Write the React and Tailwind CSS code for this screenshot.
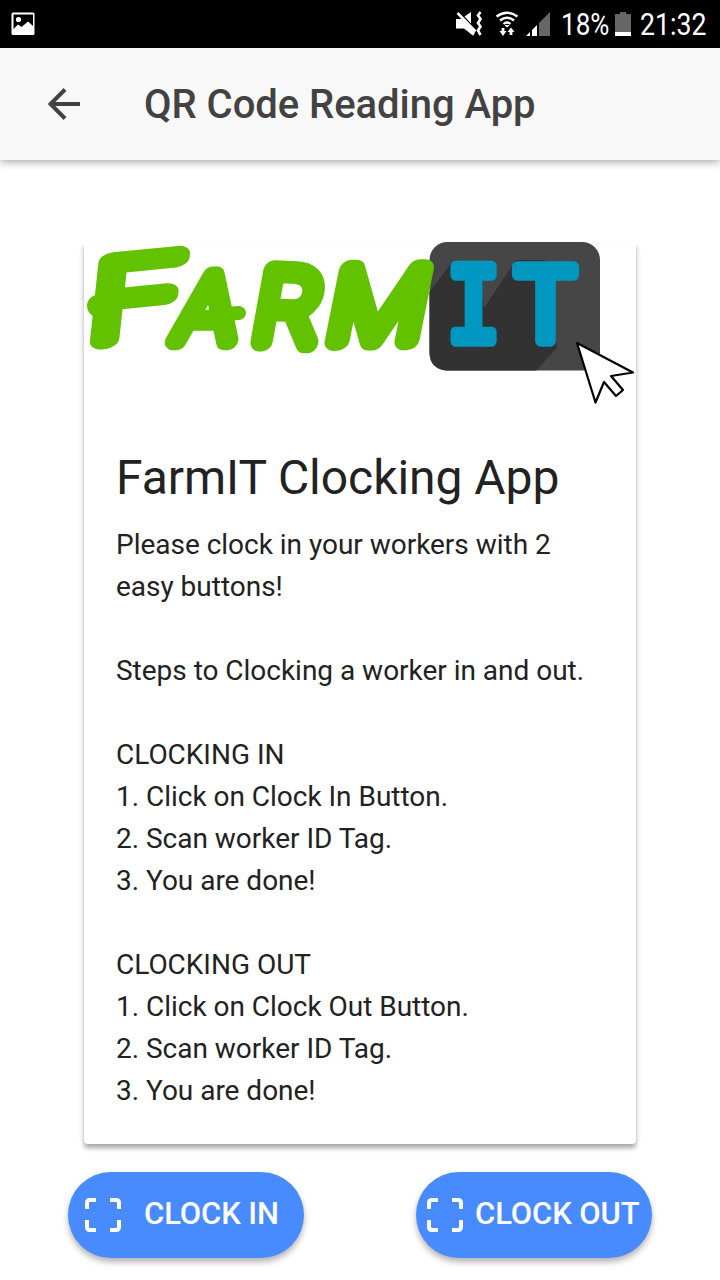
const instructions = [
  'Please clock in your workers with 2 easy buttons!',
  '',
  'Steps to Clocking a worker in and out.',
  '',
  'CLOCKING IN',
  '1. Click on Clock In Button.',
  '2. Scan worker ID Tag.',
  '3. You are done!',
  '',
  'CLOCKING OUT',
  '1. Click on Clock Out Button.',
  '2. Scan worker ID Tag.',
  '3. You are done!',
];

function StatusBar() {
  return (
    <div className="flex h-12 items-center bg-black pl-[11px] pr-[14px] text-white">
      <svg className="h-6 w-6" viewBox="0 0 24 24">
        <path
          fill="white"
          fillRule="evenodd"
          d="M2 .5h20q1.500 0 1.500 1.500v19.500q0 1.500-1.500 1.500H2q-1.500 0-1.500-1.500V2Q.5.500 2 .5ZM2.500 2.500v14.500l4.500-4.500 3.500 2.500 6.500-5.500 5 4.500V2.500Z"
        />
        <circle cx="7.500" cy="7.500" r="2.600" fill="white" />
      </svg>
      <svg className="ml-auto h-[26px] w-[96px]" viewBox="455 11 96 26">
        <path fill="white" d="M456 19h6l13 14-2 2.500-9-7h-8ZM464.500 16.500l6.500-4.500v11.500Z" />
        <path fill="white" d="m462 26 11 9.500 1.500-3-6-8Z" />
        <path stroke="white" strokeWidth="2.600" d="m457.500 13 18 18.500" />
        <path fill="none" stroke="white" strokeWidth="2.600" d="m480.500 12-2.500 3.500 2.500 3.500-2.500 4 2.500 3.500-2.500 4 2.500 4.500" />
        <g fill="none" stroke="white" strokeWidth="2.300">
          <path d="M496.500 16.500q10.500-7.500 21 0M500 20.500q7-5.500 14 0M503.500 24q3.500-3 7 0" />
          <path strokeWidth="2.800" d="M503 28v5M511 35v-5" />
        </g>
        <path fill="white" d="m499.500 31 3.500 5 3.500-5ZM507.500 32l3.500-4.500 3.500 4.500ZM504.500 25h5l-2.500 2.500Z" />
        <path fill="white" d="m526 36 4-4v4ZM532 36v-6l5-5v11Z" />
        <path fill="#666" d="M539 36V23l11-11v24Z" />
      </svg>
      <span className="ml-[10px] mt-px w-[48px] origin-left scale-x-[.84] font-[Roboto] text-[31px] leading-none">18%</span>
      <svg className="ml-[6px] h-6 w-4" viewBox="0 0 16 24">
        <path fill="#666" d="M0 2h5V0h6v2h5v18H0Z" />
        <path fill="white" d="M0 20h16v4H0Z" />
      </svg>
      <span className="ml-[9px] mt-px w-[66px] origin-left scale-x-[.86] font-[Roboto] text-[31px] leading-none">21:32</span>
    </div>
  );
}

function Logo() {
  return (
    <svg className="block h-[164px] w-[552px] overflow-visible" viewBox="84 242 552 164" role="img">
      <rect x="429.500" y="242" width="170.500" height="128.500" rx="18" fill="#464646" />
      <path fill="#323232" d="M429.500 292 452 262h22l10 46 32-48h29l12 88-21 22.500H446q-16.500-2-16.500-18Z" />
      <g
        fill="#62c200"
        stroke="#62c200"
        strokeLinejoin="round"
        strokeLinecap="round"
        fontFamily="Roboto, sans-serif"
        fontWeight="100"
        fontSize="100"
      >
        <text transform="matrix(1.5 -.15 -.12 1.1 88 341.500)" strokeWidth="17">F</text>
        <circle cx="98" cy="306" r="5" strokeWidth="12" />
        <text transform="matrix(.96 0 -.165 .92 173 341)" strokeWidth="20">A</text>
        <path strokeWidth="14" d="m225 314 14-1" />
        <text transform="matrix(.98 .04 -.18 1 251 341)" strokeWidth="20">R</text>
        <text transform="matrix(1.1 -.01 -.2 1 325 341)" strokeWidth="20">M</text>
      </g>
      <g fill="#0097c0" stroke="#0097c0" strokeLinejoin="round" fontSize="100">
        <text fontFamily="Liberation Mono, monospace" strokeWidth="10" transform="matrix(.92 0 0 1.14 446 341)">I</text>
        <text fontFamily="Roboto, sans-serif" strokeWidth="11" transform="matrix(1.02 0 0 1.04 515 341)">T</text>
      </g>
      <path
        fill="white"
        stroke="black"
        strokeWidth="2.200"
        strokeLinejoin="round"
        d="m577 343 56 29.500-22 3.500 12 14-7 6-12-14-8.500 20.500Z"
      />
    </svg>
  );
}

function ScanButton({ label, className }) {
  return (
    <button
      className={`flex h-[86px] w-[236px] items-center rounded-full bg-[#488aff] font-[Roboto] text-[31px] font-medium tracking-[-0.1px] text-white shadow-[0_4px_6px_rgba(0,0,0,.3)] ${className}`}
    >
      <svg className="h-[34px] w-9 shrink-0" viewBox="0 0 36 34" fill="none" stroke="white" strokeWidth="4">
        <path d="M2 11V5q0-3 3-3h6M25 2h6q3 0 3 3v6M34 22v7q0 3-3 3h-6M11 32H5q-3 0-3-3v-7" />
      </svg>
      <span className="-mt-[3px] whitespace-nowrap leading-none">{label}</span>
    </button>
  );
}

export default function App() {
  return (
    <div className="flex h-[1280px] w-[720px] flex-col overflow-hidden bg-white font-[Roboto] text-[#222]">
      <StatusBar />
      <header className="flex h-28 shrink-0 items-center bg-[#f8f8f8] pl-12 text-[#424242] shadow-[0_2px_8px_rgba(0,0,0,.35)]">
        <svg className="h-8 w-8" viewBox="0 0 32 32" fill="none" stroke="currentColor" strokeWidth="4">
          <path d="M32 16H3M17 1.500 2.500 16 17 30.500" />
        </svg>
        <h1 className="ml-16 mt-0.5 text-[40px] font-medium tracking-[-0.04px]">QR Code Reading App</h1>
      </header>
      <main className="flex flex-col pt-[82px]">
        <section className="mx-[84px] h-[902px] rounded-b-[4px] bg-white shadow-[0_4px_5px_rgba(0,0,0,.35)]">
          <Logo />
          <div className="px-8 pt-[41px]">
            <h2 className="text-[48px] leading-[62px] tracking-[-0.04px]">FarmIT Clocking App</h2>
            <div className="mt-[15px] text-[28px] leading-[42px] tracking-[-0.02px]">
              {instructions.map((line, index) => (
                <p className="min-h-[42px]" key={index}>{line}</p>
              ))}
            </div>
          </div>
        </section>
        <div className="mt-7 flex justify-between px-[68px]">
          <ScanButton label="CLOCK IN" className="gap-[23px] pl-[17px]" />
          <ScanButton label="CLOCK OUT" className="gap-3 pl-[11px]" />
        </div>
      </main>
    </div>
  );
}
